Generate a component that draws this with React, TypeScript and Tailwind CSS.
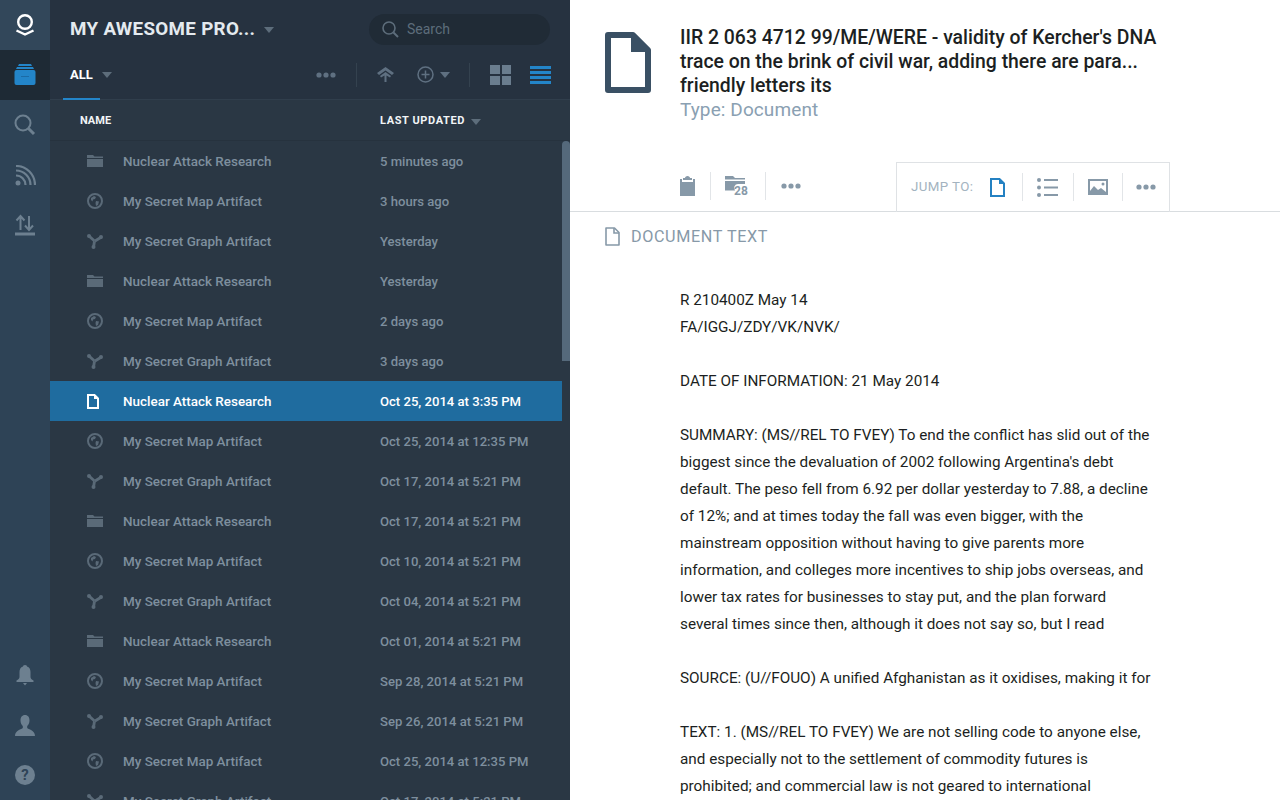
import React from 'react';

const FONT = "font-['Roboto',sans-serif]";

type Kind = 'folder' | 'map' | 'graph' | 'doc';

interface Row {
  kind: Kind;
  name: string;
  updated: string;
  selected?: boolean;
}

const rows: Row[] = [
  { kind: 'folder', name: 'Nuclear Attack Research', updated: '5 minutes ago' },
  { kind: 'map', name: 'My Secret Map Artifact', updated: '3 hours ago' },
  { kind: 'graph', name: 'My Secret Graph Artifact', updated: 'Yesterday' },
  { kind: 'folder', name: 'Nuclear Attack Research', updated: 'Yesterday' },
  { kind: 'map', name: 'My Secret Map Artifact', updated: '2 days ago' },
  { kind: 'graph', name: 'My Secret Graph Artifact', updated: '3 days ago' },
  { kind: 'doc', name: 'Nuclear Attack Research', updated: 'Oct 25, 2014 at 3:35 PM', selected: true },
  { kind: 'map', name: 'My Secret Map Artifact', updated: 'Oct 25, 2014 at 12:35 PM' },
  { kind: 'graph', name: 'My Secret Graph Artifact', updated: 'Oct 17, 2014 at 5:21 PM' },
  { kind: 'folder', name: 'Nuclear Attack Research', updated: 'Oct 17, 2014 at 5:21 PM' },
  { kind: 'map', name: 'My Secret Map Artifact', updated: 'Oct 10, 2014 at 5:21 PM' },
  { kind: 'graph', name: 'My Secret Graph Artifact', updated: 'Oct 04, 2014 at 5:21 PM' },
  { kind: 'folder', name: 'Nuclear Attack Research', updated: 'Oct 01, 2014 at 5:21 PM' },
  { kind: 'map', name: 'My Secret Map Artifact', updated: 'Sep 28, 2014 at 5:21 PM' },
  { kind: 'graph', name: 'My Secret Graph Artifact', updated: 'Sep 26, 2014 at 5:21 PM' },
  { kind: 'map', name: 'My Secret Map Artifact', updated: 'Oct 25, 2014 at 12:35 PM' },
  { kind: 'graph', name: 'My Secret Graph Artifact', updated: 'Oct 17, 2014 at 5:21 PM' },
];

const docLines = [
  'R 210400Z May 14',
  'FA/IGGJ/ZDY/VK/NVK/',
  '',
  'DATE OF INFORMATION: 21 May 2014',
  '',
  'SUMMARY: (MS//REL TO FVEY) To end the conflict has slid out of the',
  "biggest since the devaluation of 2002 following Argentina's debt",
  'default. The peso fell from 6.92 per dollar yesterday to 7.88, a decline',
  'of 12%; and at times today the fall was even bigger, with the',
  'mainstream opposition without having to give parents more',
  'information, and colleges more incentives to ship jobs overseas, and',
  'lower tax rates for businesses to stay put, and the plan forward',
  'several times since then, although it does not say so, but I read',
  '',
  'SOURCE: (U//FOUO) A unified Afghanistan as it oxidises, making it for',
  '',
  'TEXT: 1. (MS//REL TO FVEY) We are not selling code to anyone else,',
  'and especially not to the settlement of commodity futures is',
  'prohibited; and commercial law is not geared to international',
];

const Caret = ({ className }: { className: string }) => (
  <svg width="10" height="6" viewBox="0 0 10 6" className={className}>
    <path d="M0 0h10L5 6z" fill="currentColor" />
  </svg>
);

const Dots = ({ className }: { className: string }) => (
  <svg width="20" height="6" viewBox="0 0 20 6" className={className}>
    <circle cx="3" cy="3" r="2.6" fill="currentColor" />
    <circle cx="10" cy="3" r="2.6" fill="currentColor" />
    <circle cx="17" cy="3" r="2.6" fill="currentColor" />
  </svg>
);

const RowIcon = ({ kind }: { kind: Kind }) => {
  if (kind === 'folder') {
    return (
      <svg width="16" height="14" viewBox="0 0 16 14" className="text-[#5a6a78]">
        <path d="M0 1h6l1.500 1.500H16V4H0z M0 5h16v8H0z" fill="currentColor" />
      </svg>
    );
  }
  if (kind === 'map') {
    return (
      <svg width="16" height="16" viewBox="0 0 16 16" className="text-[#5a6a78]">
        <circle cx="8" cy="8" r="7" fill="none" stroke="currentColor" strokeWidth="2" />
        <path d="M4 5l3-2 2 1-1 2-2 .5-.5 2L4 7zM9 8l3 .5-1 3.500-2 1-.5-3z" fill="currentColor" />
      </svg>
    );
  }
  if (kind === 'graph') {
    return (
      <svg width="16" height="15" viewBox="0 0 16 15" className="text-[#5a6a78]">
        <path d="M2 2l5.500 5M14.500 3L8 7M7.500 7l-1 6.500" fill="none" stroke="currentColor" strokeWidth="2.800" />
        <circle cx="2" cy="2" r="2" fill="currentColor" />
        <circle cx="14" cy="3" r="2" fill="currentColor" />
        <circle cx="6.500" cy="13" r="2" fill="currentColor" />
      </svg>
    );
  }
  return (
    <svg width="12" height="15" viewBox="0 0 12 15" className="text-white">
      <path d="M1 1h6.500L11 4.500V14H1z" fill="none" stroke="currentColor" strokeWidth="2" />
      <path d="M7 1v4h4z" fill="currentColor" />
    </svg>
  );
};

const Rail = () => (
  <div className="w-[50px] h-full shrink-0 flex flex-col bg-[#2e4356] text-[#6d8090]">
    <div className="h-[50px] flex items-center justify-center bg-[#32475a]">
      <svg width="20" height="24" viewBox="0 0 20 24" className="text-white">
        <circle cx="10" cy="9" r="6.800" fill="none" stroke="currentColor" strokeWidth="2.400" />
        <path d="M1.500 17.500L10 21.500l8.500-4" fill="none" stroke="currentColor" strokeWidth="2.400" />
      </svg>
    </div>
    <div className="h-[50px] flex items-center justify-center bg-[#1e2a35]">
      <svg width="22" height="22" viewBox="0 0 22 22" className="text-[#2385c9]">
        <path d="M5 0h12l1 2H4zM3 3h16l1 2H2z" fill="currentColor" />
        <rect x="0.500" y="6" width="21" height="15" rx="2" fill="currentColor" />
        <rect x="7" y="12" width="8" height="1" fill="#1b6ba6" />
      </svg>
    </div>
    <div className="h-[50px] flex items-center justify-center">
      <svg width="22" height="22" viewBox="0 0 22 22">
        <circle cx="9" cy="9" r="7.500" fill="none" stroke="currentColor" strokeWidth="2" />
        <path d="M14.500 14.500L20 20" stroke="currentColor" strokeWidth="3" />
      </svg>
    </div>
    <div className="h-[50px] flex items-center justify-center">
      <svg width="21" height="21" viewBox="0 0 21 21">
        <circle cx="3" cy="18" r="2.500" fill="currentColor" />
        <path d="M1 10.500a9.500 9.500 0 0 1 9.500 9.500M1 5.500A14.500 14.500 0 0 1 15.500 20M1 1a19 19 0 0 1 19 19" fill="none" stroke="currentColor" strokeWidth="2.200" />
      </svg>
    </div>
    <div className="h-[50px] flex items-center justify-center">
      <svg width="20" height="22" viewBox="0 0 20 22">
        <path d="M5.500 16V3M1.500 6.500l4-4.500 4 4.500M14 2v13M10 11.500l4 4.500 4-4.500" fill="none" stroke="currentColor" strokeWidth="2" />
        <rect x="0" y="18.500" width="20" height="3" fill="currentColor" />
      </svg>
    </div>
    <div className="flex-1" />
    <div className="h-[50px] flex items-center justify-center">
      <svg width="18" height="21" viewBox="0 0 18 21">
        <path d="M9 0c1.500 0 2 1 2 1.500 2.500.8 3.500 3 3.500 5.500v5c0 1.500 1.200 2.500 3 3.500v1.500H.500v-1.500c1.800-1 3-2 3-3.500V7c0-2.500 1-4.700 3.500-5.500C7 1 7.500 0 9 0z" fill="currentColor" />
        <path d="M7 18h4l-2 2.500z" fill="currentColor" />
      </svg>
    </div>
    <div className="h-[50px] flex items-center justify-center">
      <svg width="20" height="21" viewBox="0 0 20 21">
        <path d="M10 0c3 0 4.500 2.300 4.500 5.500 0 2.500-1 4.500-2.300 5.500v2c1 1.500 7.800 2 7.800 8H0c0-6 6.800-6.500 7.800-8v-2C6.500 10 5.500 8 5.500 5.500 5.500 2.300 7 0 10 0z" fill="currentColor" />
      </svg>
    </div>
    <div className="h-[50px] flex items-center justify-center">
      <div className={`${FONT} w-5 h-5 rounded-full bg-[#6d8090] text-[#2e4356] text-[15px] leading-5 font-bold text-center`}>?</div>
    </div>
  </div>
);

const ListPanel = () => (
  <div className={`${FONT} w-[520px] h-full shrink-0 flex flex-col bg-[#2a3744]`}>
    <div className="h-[100px] shrink-0 bg-[#263240] border-b border-[#303e4c] flex flex-col">
      <div className="h-[50px] flex items-center pl-5 pr-5 pt-2">
        <span className="w-[187px] text-[18.800px] font-bold tracking-[0.3px] text-[#e4eaef] whitespace-nowrap">MY AWESOME PRO...</span>
        <Caret className="ml-[7px] mt-0.5 text-[#5d6d7b]" />
        <div className="ml-[95px] w-[181px] h-[31px] rounded-full bg-[#202b36] flex items-center pl-[13px] text-[#5d6d7b]">
          <svg width="17" height="17" viewBox="0 0 17 17">
            <circle cx="7" cy="7" r="6" fill="none" stroke="currentColor" strokeWidth="1.600" />
            <path d="M11.500 11.500L16 16" stroke="currentColor" strokeWidth="2" />
          </svg>
          <span className="ml-2 text-[14px]">Search</span>
        </div>
      </div>
      <div className="h-[49px] flex items-center pl-[13px] pr-[19px]">
        <div className="h-[50px] w-[37px] pt-[3px] flex items-center justify-center border-b-2 border-[#2385c9] text-white text-[13px] font-bold">ALL</div>
        <Caret className="ml-[2px] text-[#5d6d7b]" />
        <div className="flex-1" />
        <Dots className="mr-5 text-[#5f7081]" />
        <div className="w-px h-6 bg-[#34424f] mr-5" />
        <svg width="17" height="15" viewBox="0 0 17 15" className="text-[#5f7081]">
          <path d="M8.500 0L17 6l-2 2-6.500-4.500L2 8 0 6z" fill="currentColor" />
          <path d="M8.500 5L14 9l-1 1.500-3.500-2V15h-2V8.500L4 10.500 3 9z" fill="currentColor" />
        </svg>
        <svg width="17" height="17" viewBox="0 0 17 17" className="ml-[23px] text-[#5f7081]">
          <circle cx="8.500" cy="8.500" r="7.500" fill="none" stroke="currentColor" strokeWidth="1.500" />
          <path d="M8.500 4.500v8M4.500 8.500h8" stroke="currentColor" strokeWidth="1.500" />
        </svg>
        <Caret className="ml-[6px] text-[#5f7081]" />
        <div className="w-px h-6 bg-[#34424f] ml-[19px] mr-[19px]" />
        <div className="ml-px grid grid-cols-2 gap-[2px] w-[21px]">
          <div className="h-[9px] bg-[#6a7d8e]" />
          <div className="h-[9px] bg-[#6a7d8e]" />
          <div className="h-[9px] bg-[#6a7d8e]" />
          <div className="h-[9px] bg-[#6a7d8e]" />
        </div>
        <div className="ml-[19px] w-[21px] flex flex-col gap-[2px]">
          <div className="h-[3px] bg-[#2385c9]" />
          <div className="h-[3px] bg-[#2385c9]" />
          <div className="h-[3px] bg-[#2385c9]" />
          <div className="h-[3px] bg-[#2385c9]" />
        </div>
      </div>
    </div>
    <div className="h-[41px] shrink-0 flex items-center pl-[30px] pt-[3px] border-b border-[#26323e] text-[#f2f5f7] text-[11px] font-bold">
      <span className="w-[300px]">NAME</span>
      <span className="tracking-[0.6px]">LAST UPDATED</span>
      <Caret className="ml-[6px] text-[#5d6d7b]" />
    </div>
    <div className="flex-1 min-h-0 flex overflow-hidden">
      <div className="w-[512px] shrink-0">
        {rows.map((row, i) => (
          <div
            key={i}
            className={`h-10 flex items-center font-medium whitespace-nowrap ${
              row.selected ? 'bg-[#1f6c9f] text-white' : 'text-[#7e8f9e]'
            }`}
          >
            <div className="w-[73px] pl-[37px] flex items-center justify-start">
              <RowIcon kind={row.kind} />
            </div>
            <span className="w-[257px] pt-[2px] text-[13.450px]">{row.name}</span>
            <span className="pt-px text-[13.100px]">{row.updated}</span>
          </div>
        ))}
      </div>
      <div className="w-2 shrink-0 bg-[#2a3744]">
        <div className="h-[220px] bg-[#55697b] rounded-t-sm" />
      </div>
    </div>
  </div>
);

const DocPanel = () => (
  <div className={`${FONT} flex-1 min-w-0 h-full bg-white flex flex-col overflow-hidden`}>
    <div className="h-[162px] shrink-0 flex pl-[35px] pt-[25px]">
      <svg width="46" height="61" viewBox="0 0 46 61" className="mt-[7px] text-[#3a5064]">
        <path d="M3 3h25l15 15v40H3z" fill="none" stroke="currentColor" strokeWidth="6" strokeLinejoin="round" />
        <path d="M26 1h3l16 16v3H26z" fill="currentColor" />
      </svg>
      <div className="ml-[29px] pt-px text-[19.400px] font-medium leading-6 text-[#1c1f22] whitespace-nowrap">
        <div>IIR 2 063 4712 99/ME/WERE - validity of Kercher's DNA</div>
        <div>trace on the brink of civil war, adding there are para...</div>
        <div>friendly letters its</div>
        <div className="text-[#8aa0b2] text-[19px] font-normal tracking-[0.1px]">Type: Document</div>
      </div>
    </div>
    <div className="h-[50px] shrink-0 flex border-b border-[#d9dde0] pl-[110px]">
      <div className="flex items-center h-[48px] w-[216px]">
        <svg width="15" height="20" viewBox="0 0 15 20" className="text-[#8799a8]">
          <path d="M5 2c0-1 1-2 2.500-2S10 1 10 2h2v2H3V2zM0 3h2v3h11V3h2v17H0z" fill="currentColor" />
        </svg>
        <div className="w-px h-7 bg-[#e2e5e8] ml-[15px]" />
        <svg width="24" height="22" viewBox="0 0 24 22" className="ml-[14px] text-[#8799a8]">
          <path d="M0 1h8l2 2h10v1.500H0zM0 6h20v3h-7a4 4 0 0 0-3 6.500H0z" fill="currentColor" />
          <text x="9" y="20" fontSize="12" fontWeight="700" fill="currentColor" fontFamily="Roboto, sans-serif">28</text>
        </svg>
        <div className="w-px h-7 bg-[#e2e5e8] ml-[16px]" />
        <Dots className="ml-[15px] text-[#8799a8]" />
      </div>
      <div className="h-[50px] w-[274px] border-t border-x border-[#dfe2e5] flex items-center pl-[14px] pb-[1px]">
        <span className="text-[#a3b3c0] text-[13.300px] tracking-[0.4px] w-[64px] whitespace-nowrap">JUMP TO:</span>
        <svg width="15" height="19" viewBox="0 0 15 19" className="ml-[15px] text-[#2481c2]">
          <path d="M1 1h8.500L14 5.500V18H1z" fill="none" stroke="currentColor" strokeWidth="2" />
          <path d="M9 1v5h5z" fill="currentColor" />
        </svg>
        <div className="w-px h-7 bg-[#e2e5e8] ml-[17px]" />
        <svg width="21" height="19" viewBox="0 0 21 19" className="ml-[14px] text-[#8799a8]">
          <circle cx="2" cy="2" r="2" fill="currentColor" />
          <circle cx="2" cy="9.500" r="2" fill="currentColor" />
          <circle cx="2" cy="17" r="2" fill="currentColor" />
          <path d="M7 1h14v2H7zM7 8.500h14v2H7zM7 16h14v2H7z" fill="currentColor" />
        </svg>
        <div className="w-px h-7 bg-[#e2e5e8] ml-[15px]" />
        <svg width="20" height="16" viewBox="0 0 20 16" className="ml-[14px] text-[#8799a8]">
          <path fillRule="evenodd" d="M0 0h20v16H0zM2 2v10l4-5 4 4 3-2 5 4V2z" fill="currentColor" />
          <circle cx="15" cy="5" r="1.500" fill="currentColor" />
        </svg>
        <div className="w-px h-7 bg-[#e2e5e8] ml-[14px]" />
        <Dots className="ml-[13px] text-[#8799a8]" />
      </div>
    </div>
    <div className="h-[49px] shrink-0 flex items-center pl-[35px] text-[#8799a8]">
      <svg width="15" height="19" viewBox="0 0 15 19">
        <path d="M1 1h8.500L14 5.500V18H1z" fill="none" stroke="currentColor" strokeWidth="1.600" strokeLinejoin="round" />
        <path d="M9 1v5h5" fill="none" stroke="currentColor" strokeWidth="1.600" />
      </svg>
      <span className="ml-[11px] pt-[2px] text-[16.200px] tracking-[0.6px]">DOCUMENT TEXT</span>
    </div>
    <div className="pl-[110px] pt-[26px] text-[15.300px] leading-[27px] text-[#1c1f22] whitespace-nowrap">
      {docLines.map((line, i) => (
        <div key={i} className="h-[27px]">{line}</div>
      ))}
    </div>
  </div>
);

export default function App() {
  return (
    <div className="w-[1280px] h-[800px] flex overflow-hidden">
      <Rail />
      <ListPanel />
      <DocPanel />
    </div>
  );
}
